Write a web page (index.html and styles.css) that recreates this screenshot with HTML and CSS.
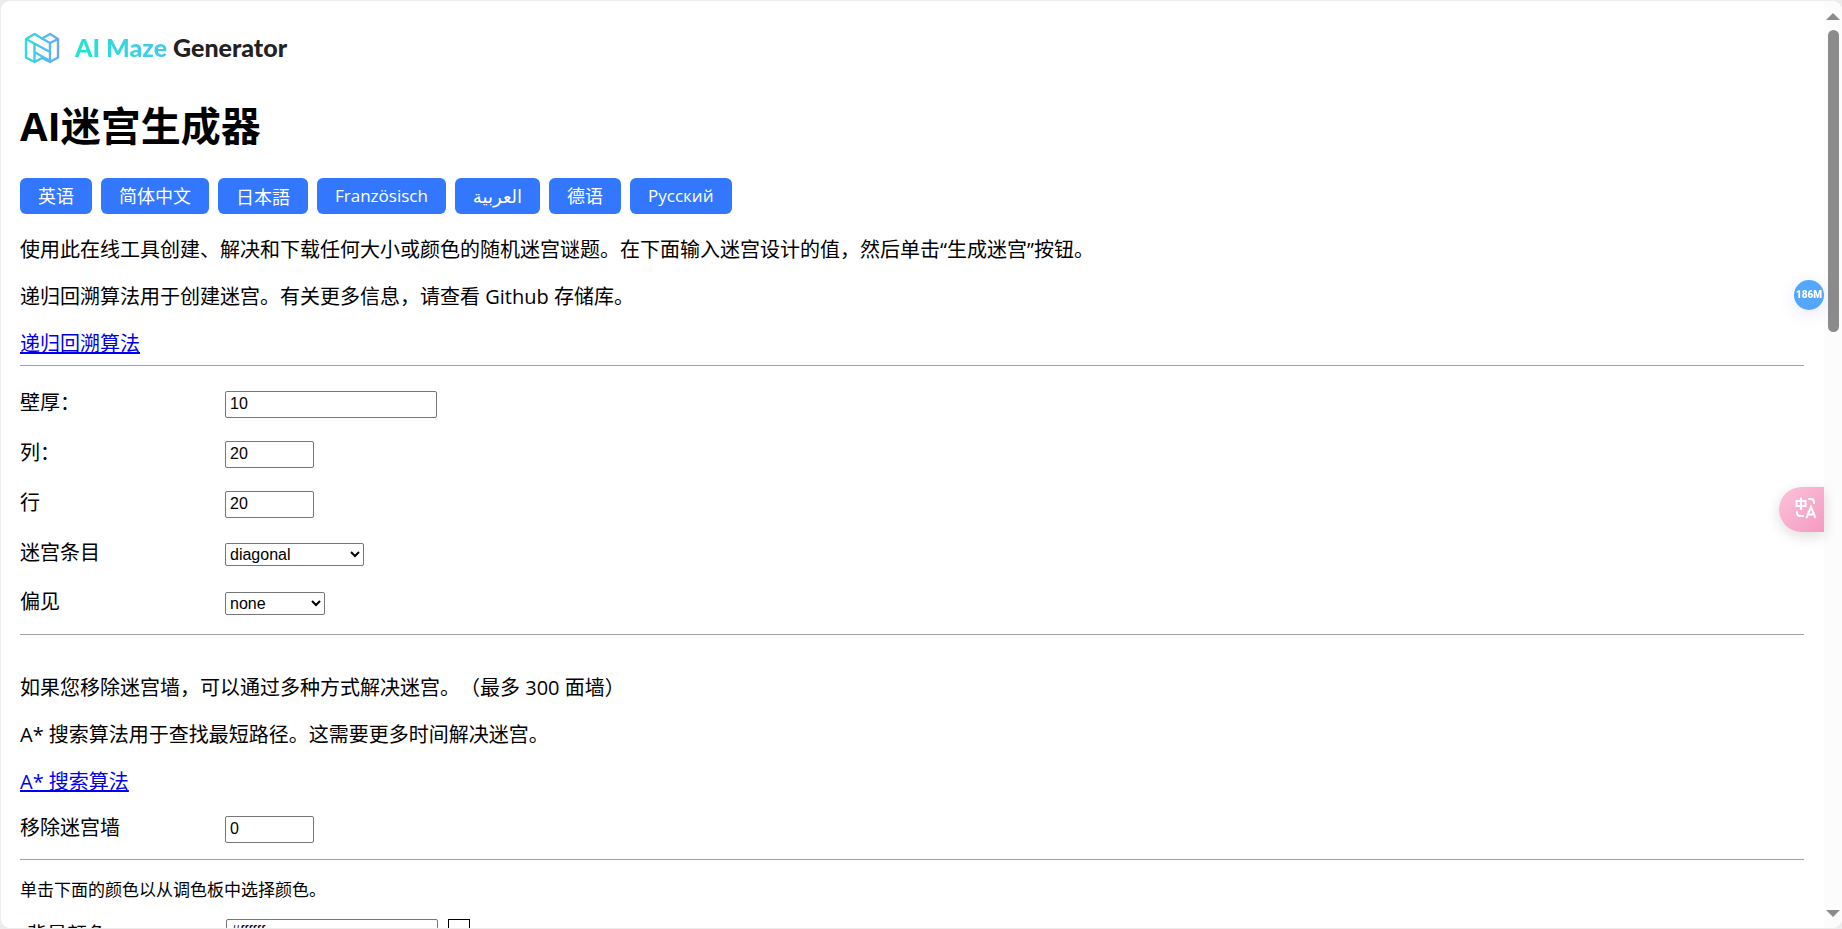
FILE: index.html
```html
<!doctype html>
<html lang="zh-CN">

<head>
  <meta charset="UTF-8">
  <meta name="viewport" content="width=device-width, initial-scale=1.0">
  <title>AI迷宫生成器</title>
  <link rel="stylesheet" href="styles.css">
</head>

<body>
  <div class="window">
    <main class="page">
      <a class="logo" href="#">
        <svg width="36" height="32" viewBox="0 0 36 32" fill="none" stroke="url(#logoFill)" stroke-width="2.4" stroke-linejoin="round" aria-hidden="true">
          <defs>
            <linearGradient id="logoFill" x1="0" y1="0" x2="36" y2="0" gradientUnits="userSpaceOnUse">
              <stop offset="0" stop-color="#2be0d8" />
              <stop offset="1" stop-color="#6ca6fb" />
            </linearGradient>
          </defs>
          <path d="M2 7L10.500 2L18 6.500L26 2L34 7V25.500L26 30L18 26L10.500 30L2 25.500Z" />
          <path d="M2 7L26 20M18 6.500L26 11L34 7M26 11V30M10.500 12V30M10.500 20L26 29" />
        </svg>
        <span class="logo-text"><span class="logo-accent">AI Maze</span> Generator</span>
      </a>

      <h1>AI迷宫生成器</h1>

      <nav class="langs">
        <a href="#">英语</a>
        <a href="#">简体中文</a>
        <a href="#" lang="ja">日本語</a>
        <a href="#" lang="de">Französisch</a>
        <a href="#" lang="ar">العربية</a>
        <a href="#">德语</a>
        <a href="#" lang="ru">Русский</a>
      </nav>

      <div class="text">
        <p>使用此在线工具创建、解决和下载任何大小或颜色的随机迷宫谜题。在下面输入迷宫设计的值，然后单击“生成迷宫”按钮。</p>
        <p>递归回溯算法用于创建迷宫。有关更多信息，请查看 Github 存储库。</p>
        <p><a href="#">递归回溯算法</a></p>
      </div>

      <hr>

      <form class="fields">
        <div class="row">
          <label for="wall">壁厚：</label>
          <input id="wall" class="wide" type="text" value="10">
        </div>
        <div class="row">
          <label for="cols">列：</label>
          <input id="cols" type="text" value="20">
        </div>
        <div class="row">
          <label for="rows">行</label>
          <input id="rows" type="text" value="20">
        </div>
        <div class="row">
          <label for="entry">迷宫条目</label>
          <select id="entry" class="entry">
            <option>diagonal</option>
          </select>
        </div>
        <div class="row row-last">
          <label for="bias">偏见</label>
          <select id="bias" class="bias">
            <option>none</option>
          </select>
        </div>
      </form>

      <hr>

      <div class="text walls">
        <p>如果您移除迷宫墙，可以通过多种方式解决迷宫。（最多 300 面墙）</p>
        <p>A* 搜索算法用于查找最短路径。这需要更多时间解决迷宫。</p>
        <p><a href="#">A* 搜索算法</a></p>
        <div class="row">
          <label for="remove">移除迷宫墙</label>
          <input id="remove" type="text" value="0">
        </div>
      </div>

      <hr>

      <p class="hint">单击下面的颜色以从调色板中选择颜色。</p>
      <div class="row color-row">
        <label for="background">背景颜色</label>
        <input id="background" class="wide" type="text" value="#ffffff">
        <button class="swatch" type="button" aria-label="背景颜色"></button>
      </div>
    </main>

    <div class="scrollbar">
      <div class="arrow arrow-up"></div>
      <div class="thumb"></div>
      <div class="arrow arrow-down"></div>
    </div>
  </div>

  <div class="memory">186M</div>
  <button class="translate" type="button" aria-label="翻译">
    <svg width="22" height="22" viewBox="0 0 22 22" fill="none" stroke="#fff" stroke-width="2" aria-hidden="true">
      <path d="M1.500 4H10.500V9H1.500ZM6 0.500V13" />
      <path d="M13 2H16Q19 2 19 6V7M2 14V16Q2 19 5 19H9" />
      <path d="M11.500 21L16 10L20.500 21M13 17.500H19" />
    </svg>
  </button>
</body>

</html>
```
FILE: styles.css
```css
* {
  box-sizing: border-box;
}

body {
  margin: 0;
  background: #ececec;
  color: #000;
  font: 20px/27px "Open Sans", "Noto Sans CJK SC", "DejaVu Sans", sans-serif;
  text-spacing-trim: space-all;
}

.window {
  display: flex;
  height: 100vh;
  overflow: hidden;
  background: #fff;
  border: 1px solid #ececec;
  border-width: 1px 0 1px 1px;
  border-radius: 10px;
}

.page {
  flex: 1;
  padding: 28px 20px 0 19px;
}

.logo {
  display: flex;
  align-items: center;
  gap: 15px;
  height: 38px;
  padding-left: 4px;
  color: #222;
  text-decoration: none;
}

.logo-text {
  padding-bottom: 2px;
  font: 900 25px/32px Lato, sans-serif;
}

.logo-accent {
  background: linear-gradient(90deg, #20e3d5, #45c8ef);
  -webkit-background-clip: text;
  background-clip: text;
  color: transparent;
}

h1 {
  margin: 32px 0 25px;
  font-size: 40px;
  line-height: 54px;
}

.langs {
  display: flex;
  gap: 9px;
}

.langs a {
  padding: 0 18px;
  border-radius: 6px;
  background: #3377ff;
  color: #fff;
  font-size: 18px;
  line-height: 36px;
  text-decoration: none;
}

.langs a:lang(ja) {
  font-family: "Noto Sans CJK JP", sans-serif;
}

.langs a:lang(de),
.langs a:lang(ru) {
  font-size: 17px;
}

.text {
  display: grid;
  gap: 20px;
  margin-top: 22px;
}

p {
  margin: 0;
}

a {
  color: #0000ee;
}

hr {
  height: 1px;
  margin: 8px 0 0;
  border: 0;
  background: #a0a0a0;
}

.fields {
  display: grid;
  gap: 23px;
  margin: 25px 0 18px;
}

.row {
  display: flex;
  align-items: center;
  height: 27px;
}

.row-last {
  height: 25px;
}

label {
  width: 205px;
  padding-bottom: 4px;
}

input,
select {
  border: 1px solid #767676;
  border-radius: 2px;
  background: #fff;
  color: #000;
  font: 16px "Liberation Sans", Arial, sans-serif;
}

input {
  width: 89px;
  height: 27px;
  padding: 0 4px 1px;
}

.wide {
  width: 212px;
}

select {
  height: 23px;
}

.entry {
  width: 139px;
}

.bias {
  width: 100px;
}

.walls {
  margin: 39px 0 16px;
}

.walls .row {
  margin-top: 1px;
}

.hint {
  margin-top: 16px;
  font-size: 17px;
}

.color-row {
  margin-top: 16px;
}

.color-row label {
  width: 206px;
  padding: 4px 0 0 7px;
}

.swatch {
  width: 22px;
  height: 27px;
  margin-left: 10px;
  border: 1px solid #000;
  background: #fff;
}

.scrollbar {
  display: flex;
  flex-direction: column;
  align-items: center;
  width: 18px;
  padding: 12px 0 11px;
  background: #fcfcfc;
}

.arrow {
  border: 7px solid transparent;
}

.arrow-up {
  border-top: 0;
  border-bottom-color: #8b8b8b;
}

.arrow-down {
  margin-top: auto;
  border-bottom: 0;
  border-top-color: #8b8b8b;
}

.thumb {
  width: 11px;
  height: 302px;
  margin-top: 10px;
  border-radius: 6px;
  background: #8b8b8b;
}

/* floating widgets docked to the right edge */
.memory {
  position: fixed;
  top: 280px;
  right: 18px;
  width: 30px;
  height: 30px;
  border-radius: 50%;
  background: #55a6ff;
  box-shadow: 0 4px 16px rgba(90, 100, 255, 0.15);
  color: #fff;
  font: 900 10px/29px Roboto, sans-serif;
  text-align: center;
}

.translate {
  position: fixed;
  top: 487px;
  right: 18px;
  display: flex;
  align-items: center;
  width: 45px;
  height: 45px;
  padding: 0 0 4px 16px;
  border: 0;
  border-radius: 23px 0 0 23px;
  background: linear-gradient(135deg, #fbc3da, #f49ac1);
  box-shadow: 0 4px 14px rgba(0, 0, 0, 0.14);
}
```
